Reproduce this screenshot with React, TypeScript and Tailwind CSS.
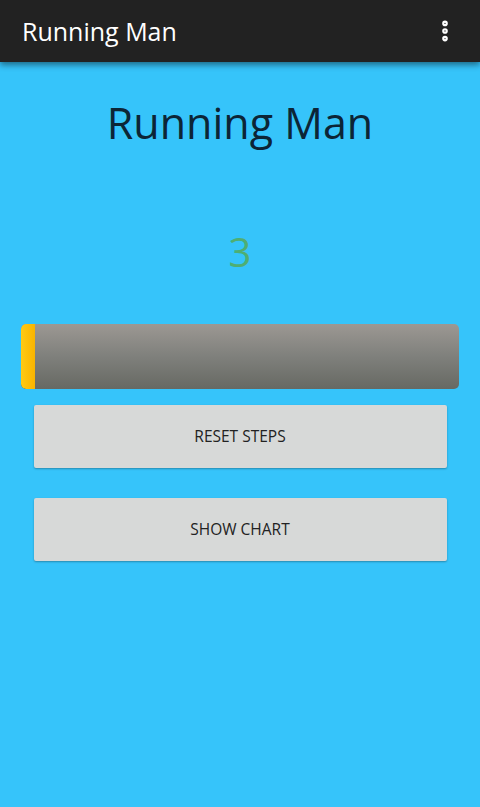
import { MoreVertical } from "lucide-react";

export default function App() {
  const steps = 3;
  const goal = 100;

  return (
    <div
      className="w-[480px] h-[807px] bg-[#36c4fa] flex flex-col overflow-hidden"
      style={{ fontFamily: "'Open Sans', 'Liberation Sans', sans-serif" }}
    >
      {/* Action bar */}
      <div className="h-[62px] bg-[#222222] flex items-center justify-between pl-[22px] pr-[22px] shadow-[0_3px_6px_rgba(0,0,0,0.45)] relative z-10">
        <span className="text-white text-[25px] leading-none">Running Man</span>
        <MoreVertical className="w-[26px] h-[26px] text-white" strokeWidth={3.2} />
      </div>

      <div className="flex flex-col items-center">
        <h1 className="mt-[34px] text-[#0c2536] text-[43px] leading-[54px]">Running Man</h1>

        <div className="mt-[77px] text-[#4fae72] text-[40px] leading-[50px]">{steps}</div>

        {/* Progress bar */}
        <div className="mt-[47px] w-[438px] h-[65px] rounded-[5px] overflow-hidden bg-gradient-to-b from-[#9c9893] via-[#7f807c] to-[#676963] flex">
          <div
            className="h-full bg-gradient-to-r from-[#ffca12] to-[#f9b400] rounded-l-[5px]"
            style={{ width: `${Math.max((steps / goal) * 438, 14)}px` }}
          />
        </div>

        <button className="mt-[16px] w-[413px] h-[63px] bg-[#d7d9d8] rounded-[2px] shadow-[0_1px_2px_rgba(0,0,0,0.3)] text-[#222] text-[15.5px]">
          RESET STEPS
        </button>

        <button className="mt-[30px] w-[413px] h-[63px] bg-[#d7d9d8] rounded-[2px] shadow-[0_1px_2px_rgba(0,0,0,0.3)] text-[#222] text-[15.5px]">
          SHOW CHART
        </button>
      </div>
    </div>
  );
}
